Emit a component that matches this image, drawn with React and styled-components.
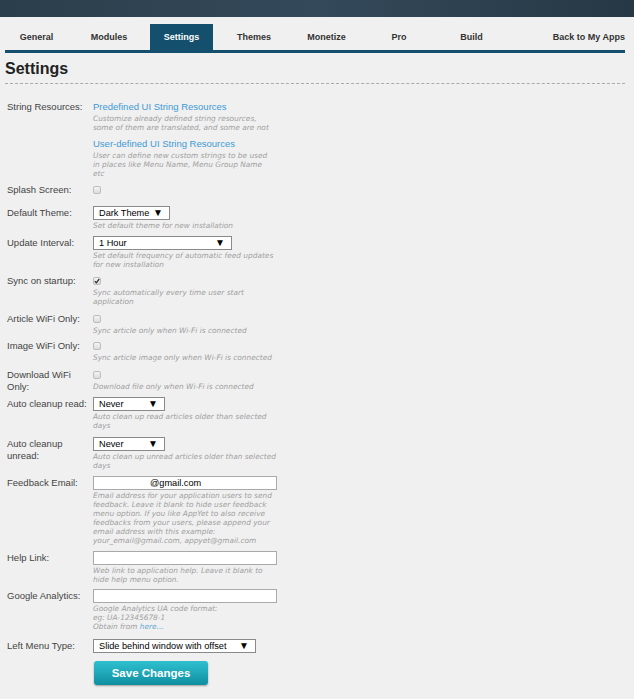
import React from 'react'
import styled, { createGlobalStyle } from 'styled-components'

const GlobalStyle = createGlobalStyle`
  html, body {
    margin: 0;
    padding: 0;
    background: #f0f0f0;
    font-family: "Liberation Sans", Arial, sans-serif;
    color: #444;
  }
`

const TopBar = styled.div`
  height: 17px;
  background: linear-gradient(90deg, #2b3e4b 0%, #34495a 50%, #263845 100%);
`

const Page = styled.div`
  padding: 0 9px 0 5px;
`

const TabBar = styled.nav`
  display: flex;
  align-items: stretch;
  margin-top: 7px;
  height: 26px;
  border-bottom: 3px solid #14506e;
`

const Tab = styled.a`
  display: flex;
  align-items: center;
  justify-content: center;
  width: 63px;
  margin-right: 9.5px;
  font-size: 9px;
  font-weight: bold;
  color: ${p => (p.$active ? '#fff' : '#333')};
  background: ${p => (p.$active ? '#14506e' : 'transparent')};
  text-decoration: none;
  cursor: pointer;
`

const BackTab = styled(Tab)`
  width: auto;
  margin: 0 0 0 auto;
`

const Heading = styled.h1`
  margin: 6px 0 0;
  padding-bottom: 4px;
  font-size: 16px;
  line-height: 20px;
  font-weight: bold;
  color: #222;
  border-bottom: 1px dashed #aaa;
`

const Form = styled.div`
  padding: 17px 0 20px 2px;
`

const Row = styled.div`
  display: grid;
  grid-template-columns: 86px 185px;
  margin-bottom: ${p => p.$gap || 6}px;
`

const Label = styled.div`
  font-size: 9.5px;
  line-height: 11.5px;
  color: #444;
  padding-top: ${p => p.$offset || 0}px;
`

const Field = styled.div`
  display: flex;
  flex-direction: column;
  align-items: flex-start;
`

const Link = styled.a`
  font-size: 9.5px;
  line-height: 12px;
  color: #3d9ad6;
  text-decoration: none;
  cursor: pointer;
`

const Help = styled.div`
  margin-top: 1px;
  margin-bottom: ${p => p.$after || 0}px;
  font-family: "DejaVu Sans", Verdana, sans-serif;
  font-size: 7.4px;
  line-height: 9px;
  font-style: italic;
  color: #a0a0a0;
`

const HelpLink = styled.span`
  color: #6aa8d0;
`

const CheckWrap = styled.div`
  height: 12px;
  display: flex;
  align-items: center;
`

const Check = styled.span`
  box-sizing: border-box;
  width: 8px;
  height: 8px;
  border: 1px solid #bdbdbd;
  border-radius: 2px;
  background: linear-gradient(#f4f4f4, #dcdcdc);
  display: flex;
  align-items: center;
  justify-content: center;
`

const Select = styled.div`
  box-sizing: border-box;
  width: ${p => p.$width}px;
  height: 14px;
  display: flex;
  align-items: center;
  justify-content: space-between;
  padding: 0 6px 0 5px;
  background: #fff;
  border: 1px solid #8a8a8a;
  font-size: 9.2px;
  color: #000;
`

const Arrow = styled.span`
  font-size: 10px;
  line-height: 1;
`

const Input = styled.div`
  box-sizing: border-box;
  width: 184px;
  height: 14px;
  display: flex;
  align-items: center;
  padding-left: ${p => p.$indent || 3}px;
  background: #fff;
  border: 1px solid #a9a9a9;
  font-size: 9.2px;
  color: #000;
`

const SaveButton = styled.button`
  width: 114px;
  height: 24px;
  margin: 2px 0 0 87px;
  border: none;
  border-radius: 3px;
  background: linear-gradient(#2fc0cf, #0f8fa0);
  box-shadow: 0 1px 2px rgba(0, 0, 0, 0.35);
  color: #fff;
  font-family: "Liberation Sans", Arial, sans-serif;
  font-size: 11.5px;
  font-weight: bold;
  cursor: pointer;
`

const tabs = ['General', 'Modules', 'Settings', 'Themes', 'Monetize', 'Pro', 'Build']

const CheckBox = ({ checked }) => (
  <CheckWrap>
    <Check>
      {checked && (
        <svg width="6" height="6" viewBox="0 0 6 6">
          <path d="M0.8 3.2 L2.4 4.8 L5.2 1" stroke="#333" strokeWidth="1.3" fill="none" />
        </svg>
      )}
    </Check>
  </CheckWrap>
)

const Dropdown = ({ width, value }) => (
  <Select $width={width}>
    <span>{value}</span>
    <Arrow>▼</Arrow>
  </Select>
)

const App = () => (
  <>
    <GlobalStyle />
    <TopBar />
    <Page>
      <TabBar>
        {tabs.map(t => (
          <Tab key={t} $active={t === 'Settings'}>{t}</Tab>
        ))}
        <BackTab>Back to My Apps</BackTab>
      </TabBar>

      <Heading>Settings</Heading>

      <Form>
        <Row $gap={6}>
          <Label>String Resources:</Label>
          <Field>
            <Link>Predefined UI String Resources</Link>
            <Help $after={6}>
              Customize already defined string resources,<br />
              some of them are translated, and some are not
            </Help>
            <Link>User-defined UI String Resources</Link>
            <Help>
              User can define new custom strings to be used<br />
              in places like Menu Name, Menu Group Name<br />
              etc
            </Help>
          </Field>
        </Row>

        <Row $gap={10}>
          <Label>Splash Screen:</Label>
          <Field><CheckBox /></Field>
        </Row>

        <Row $gap={6}>
          <Label $offset={1}>Default Theme:</Label>
          <Field>
            <Dropdown width={77} value="Dark Theme" />
            <Help>Set default theme for new installation</Help>
          </Field>
        </Row>

        <Row>
          <Label $offset={1}>Update Interval:</Label>
          <Field>
            <Dropdown width={139} value="1 Hour" />
            <Help>Set default frequency of automatic feed updates for new installation</Help>
          </Field>
        </Row>

        <Row $gap={7}>
          <Label>Sync on startup:</Label>
          <Field>
            <CheckBox checked />
            <Help>Sync automatically every time user start application</Help>
          </Field>
        </Row>

        <Row $gap={5}>
          <Label>Article WiFi Only:</Label>
          <Field>
            <CheckBox />
            <Help>Sync article only when Wi-Fi is connected</Help>
          </Field>
        </Row>

        <Row $gap={7}>
          <Label>Image WiFi Only:</Label>
          <Field>
            <CheckBox />
            <Help>Sync article image only when Wi-Fi is connected</Help>
          </Field>
        </Row>

        <Row $gap={5}>
          <Label>Download WiFi Only:</Label>
          <Field>
            <CheckBox />
            <Help>Download file only when Wi-Fi is connected</Help>
          </Field>
        </Row>

        <Row $gap={7}>
          <Label $offset={1}>Auto cleanup read:</Label>
          <Field>
            <Dropdown width={72} value="Never" />
            <Help>Auto clean up read articles older than selected days</Help>
          </Field>
        </Row>

        <Row>
          <Label $offset={1}>Auto cleanup unread:</Label>
          <Field>
            <Dropdown width={72} value="Never" />
            <Help>Auto clean up unread articles older than selected days</Help>
          </Field>
        </Row>

        <Row>
          <Label $offset={1}>Feedback Email:</Label>
          <Field>
            <Input $indent={56}>@gmail.com</Input>
            <Help>
              Email address for your application users to send feedback. Leave it blank to hide user feedback
              menu option. If you like AppYet to also receive feedbacks from your users, please append your
              email address with this example:<br />
              your_email@gmail.com, appyet@gmail.com
            </Help>
          </Field>
        </Row>

        <Row $gap={5}>
          <Label $offset={1}>Help Link:</Label>
          <Field>
            <Input />
            <Help>Web link to application help. Leave it blank to hide help menu option.</Help>
          </Field>
        </Row>

        <Row $gap={8}>
          <Label $offset={1}>Google Analytics:</Label>
          <Field>
            <Input />
            <Help>
              Google Analytics UA code format:<br />
              eg: UA-12345678-1<br />
              Obtain from <HelpLink>here...</HelpLink>
            </Help>
          </Field>
        </Row>

        <Row $gap={6}>
          <Label $offset={1}>Left Menu Type:</Label>
          <Field>
            <Dropdown width={163} value="Slide behind window with offset" />
          </Field>
        </Row>

        <SaveButton>Save Changes</SaveButton>
      </Form>
    </Page>
  </>
)

export default App
